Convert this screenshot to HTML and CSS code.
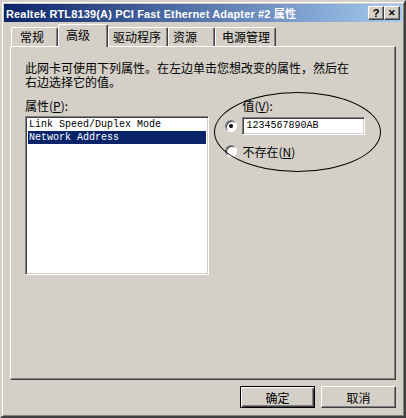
FILE: index.html
```html
<!DOCTYPE html>
<html lang="zh-CN">
<head>
  <meta charset="UTF-8" />
  <title>Realtek RTL8139(A) PCI Fast Ethernet Adapter #2 属性</title>
  <link rel="stylesheet" href="styles.css">
</head>
<body>
  <div class="window">
    <div class="titlebar">
      <span class="title">Realtek RTL8139(A) PCI Fast Ethernet Adapter #2 属性</span>
      <span class="tb-btn tb-help">?</span>
      <span class="tb-btn tb-close">&#x2715;</span>
    </div>
    <div class="content">
      <div class="tabs">
        <div class="tab tab-general">常规</div>
        <div class="tab tab-advanced active">高级</div>
        <div class="tab tab-driver">驱动程序</div>
        <div class="tab tab-res">资源</div>
        <div class="tab tab-power">电源管理</div>
      </div>
      <div class="panel">
        <p class="intro">此网卡可使用下列属性。在左边单击您想改变的属性，然后在<br>右边选择它的值。</p>
        <div class="columns">
          <div class="left">
            <div class="label">属性(<u>P</u>):</div>
            <div class="listbox">
              <div class="item">Link Speed/Duplex Mode</div>
              <div class="item selected">Network Address</div>
            </div>
          </div>
          <div class="right">
            <div class="label value-label">值(<u>V</u>):</div>
            <div class="row">
              <span class="radio checked"></span>
              <div class="textbox">1234567890AB</div>
            </div>
            <div class="row row-none">
              <span class="radio"></span>
              <span class="label">不存在(<u>N</u>)</span>
            </div>
            <div class="ellipse"></div>
          </div>
        </div>
      </div>
      <div class="actions">
        <div class="btn default">确定</div>
        <div class="btn">取消</div>
      </div>
    </div>
  </div>
</body>
</html>
```
FILE: styles.css
```css
body {
  margin: 0;
  background: #d4d0c8;
  font-family: "Noto Sans CJK SC", sans-serif;
  font-size: 12px;
  color: #000;
}
.window {
  width: 406px;
  height: 418px;
  box-sizing: border-box;
  background: #d4d0c8;
  border: 2px solid;
  border-color: #d4d0c8 #404040 #404040 #d4d0c8;
  box-shadow: inset 1px 1px #fff, inset -1px -1px #808080;
  padding: 2px;
  display: flex;
  flex-direction: column;
}
.titlebar {
  height: 18px;
  background: linear-gradient(90deg, #0a246a, #a6caf0);
  display: flex;
  align-items: center;
  padding: 0 2px 0 2px;
}
.title {
  flex: 1;
  color: #fff;
  font-family: "Liberation Sans", "Noto Sans CJK SC", sans-serif;
  font-weight: bold;
  font-size: 11px;
  letter-spacing: 0.15px;
  white-space: nowrap;
  overflow: hidden;
}
.tb-btn {
  width: 16px;
  height: 14px;
  box-sizing: border-box;
  background: #d4d0c8;
  border: 1px solid;
  border-color: #fff #404040 #404040 #fff;
  box-shadow: inset -1px -1px #808080;
  display: flex;
  align-items: center;
  justify-content: center;
  font-family: "Liberation Sans", sans-serif;
  font-weight: bold;
  font-size: 11px;
  line-height: 1;
}
.tb-close {
  font-size: 9px;
}
.content {
  flex: 1;
  padding: 2px 6px 0 6px;
  display: flex;
  flex-direction: column;
}
.tabs {
  display: flex;
  align-items: flex-end;
  height: 22px;
  padding-left: 1px;
  position: relative;
  z-index: 1;
}
.tab {
  height: 19px;
  box-sizing: border-box;
  border-top: 1px solid #fff;
  border-left: 1px solid #fff;
  border-right: 1px solid #404040;
  box-shadow: inset -1px 0 #808080;
  border-radius: 2px 2px 0 0;
  line-height: 16px;
  padding-top: 1px;
  white-space: nowrap;
}
.tab-general { width: 47px; padding-left: 8px; }
.tab-advanced { width: 50px; padding-left: 7px; }
.tab-driver { width: 60px; padding-left: 4px; }
.tab-res { width: 47px; padding-left: 4px; }
.tab-power { width: 61px; padding-left: 6px; }
.tab.active {
  height: 23px;
  margin-bottom: -1px;
  background: #d4d0c8;
  padding-top: 2px;
}
.panel {
  height: 334px;
  box-sizing: border-box;
  border: 1px solid;
  border-color: #fff #404040 #404040 #fff;
  box-shadow: inset -1px -1px #808080;
  padding: 14px 14px 0 14px;
}
.intro {
  margin: 0;
  line-height: 14px;
}
.columns {
  display: flex;
  margin-top: 10px;
}
.label {
  line-height: 13px;
}
.left {
  width: 185px;
}
.listbox {
  margin-top: 4px;
  height: 159px;
  box-sizing: border-box;
  background: #fff;
  border: 1px solid;
  border-color: #808080 #fff #fff #808080;
  box-shadow: inset 1px 1px #404040, inset -1px -1px #d4d0c8;
  padding: 1px 2px;
}
.item {
  font-family: "Liberation Mono", monospace;
  font-size: 10px;
  line-height: 13px;
  padding-left: 1px;
}
.item.selected {
  background: #0a246a;
  color: #fff;
}
.right {
  position: relative;
  margin-left: 5px;
  width: 167px;
}
.value-label {
  padding-left: 28px;
}
.row {
  display: flex;
  align-items: center;
  margin-top: 5px;
  padding-left: 11px;
}
.row-none {
  margin-top: 9px;
  height: 14px;
}
.radio {
  width: 12px;
  height: 12px;
  box-sizing: border-box;
  border-radius: 50%;
  background: #fff;
  border: 1px solid;
  border-color: #808080 #fff #fff #808080;
  box-shadow: inset 1px 1px #404040;
  margin-right: 5px;
  display: flex;
  align-items: center;
  justify-content: center;
}
.radio.checked::after {
  content: "";
  width: 4px;
  height: 4px;
  border-radius: 50%;
  background: #000;
}
.textbox {
  width: 123px;
  height: 18px;
  box-sizing: border-box;
  background: #fff;
  border: 1px solid;
  border-color: #808080 #fff #fff #808080;
  box-shadow: inset 1px 1px #404040, inset -1px -1px #d4d0c8;
  font-family: "Liberation Mono", monospace;
  font-size: 10px;
  line-height: 16px;
  padding-left: 3px;
}
.ellipse {
  position: absolute;
  left: 0;
  top: -7px;
  width: 167px;
  height: 80px;
  box-sizing: border-box;
  border: 1px solid #000;
  border-radius: 50%;
  pointer-events: none;
}
.actions {
  display: flex;
  justify-content: flex-end;
  gap: 6px;
  margin-top: 6px;
}
.btn {
  width: 75px;
  height: 22px;
  box-sizing: border-box;
  border: 1px solid;
  border-color: #fff #404040 #404040 #fff;
  box-shadow: inset -1px -1px #808080;
  display: flex;
  align-items: center;
  justify-content: center;
}
.btn.default {
  border-color: #000;
  box-shadow: inset 1px 1px #fff, inset -1px -1px #404040, inset -2px -2px #808080;
}
```
